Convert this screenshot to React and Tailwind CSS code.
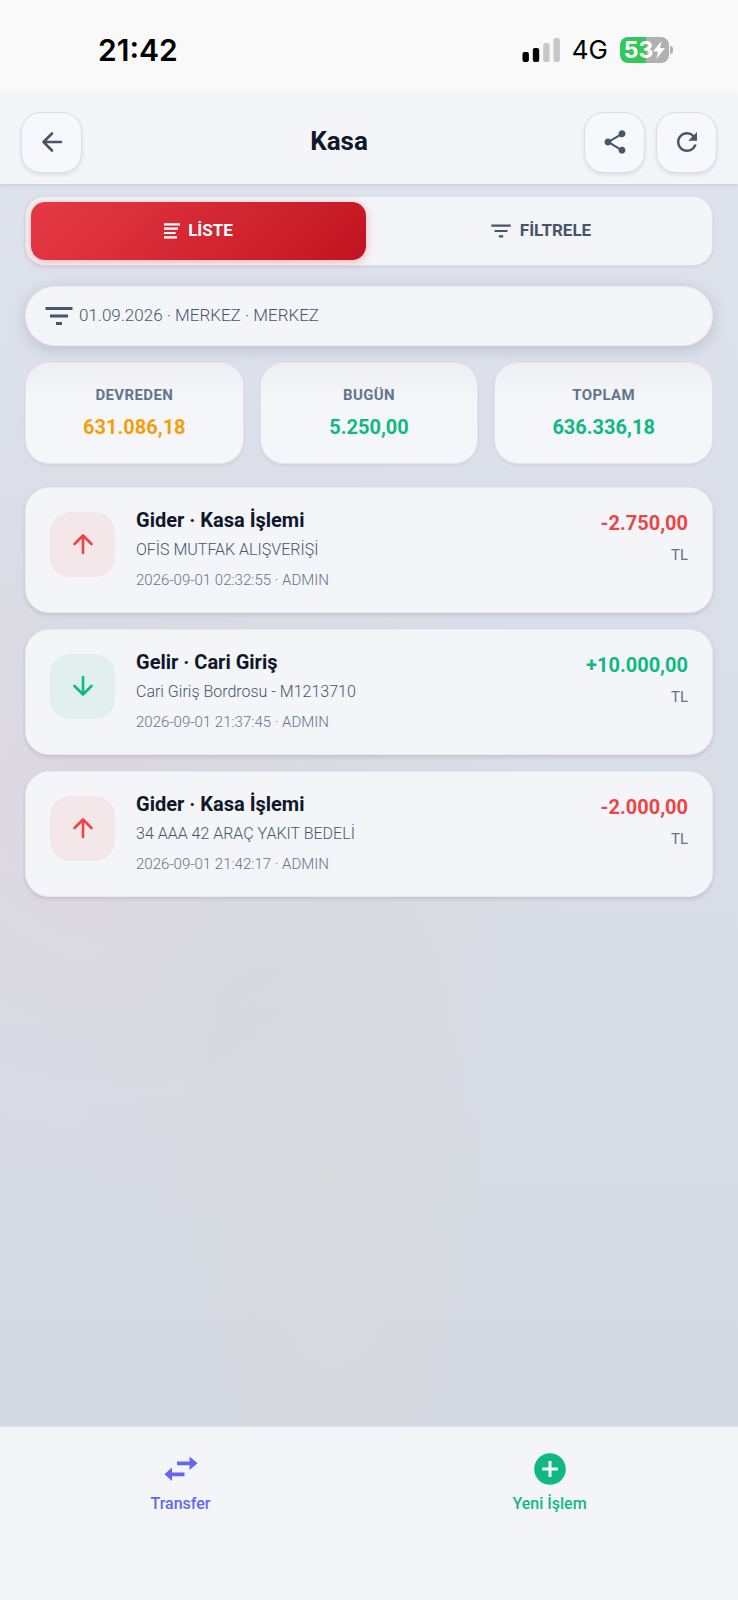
import clsx from 'clsx'
import { MdAddCircle, MdFilterList, MdRefresh, MdShare } from 'react-icons/md'

const FILTER_SUMMARY = '01.09.2026 · MERKEZ · MERKEZ'

const TOTALS = [
  { label: 'DEVREDEN', value: '631.086,18', color: 'text-[#f59e0b]' },
  { label: 'BUGÜN',    value: '5.250,00',   color: 'text-[#10b981]' },
  { label: 'TOPLAM',   value: '636.336,18', color: 'text-[#10b981]' },
]

const ENTRIES = [
  { id: 1, type: 'out', title: 'Gider · Kasa İşlemi', note: 'OFİS MUTFAK ALIŞVERİŞİ',          meta: '2026-09-01 02:32:55 · ADMIN', amount: '-2.750,00' },
  { id: 2, type: 'in',  title: 'Gelir · Cari Giriş',  note: 'Cari Giriş Bordrosu - M1213710', meta: '2026-09-01 21:37:45 · ADMIN', amount: '+10.000,00' },
  { id: 3, type: 'out', title: 'Gider · Kasa İşlemi', note: '34 AAA 42 ARAÇ YAKIT BEDELİ',    meta: '2026-09-01 21:42:17 · ADMIN', amount: '-2.000,00' },
]

const ROTATION = { up: 'rotate-0', down: 'rotate-180', left: '-rotate-90' }

function Arrow({ direction }) {
  return (
    <svg viewBox="0 0 24 24" className={clsx('size-6', ROTATION[direction])} fill="none" stroke="currentColor"
         strokeWidth="2.6" strokeLinecap="round" strokeLinejoin="round" aria-hidden="true">
      <path d="M12 21V3.500M3.500 12 12 3.500l8.500 8.500" />
    </svg>
  )
}

function ListIcon() {
  return (
    <svg viewBox="0 0 16 16" className="size-4" fill="currentColor" aria-hidden="true">
      <path d="M0 .3h16v2.200H0zM0 4.600h14v2.200H0zM0 8.900h11.500v2.200H0zM0 13.200h13v2.200H0z" />
    </svg>
  )
}

function TransferIcon() {
  return (
    <svg viewBox="0 0 34 38" className="h-[38px] w-[34px]" fill="currentColor" aria-hidden="true">
      <path d="M13 11.500h12.500V6.500L33.500 13.300l-8 6.800V15.200H13z" />
      <path d="M20.500 22.500H8V17.500L.5 24.300l7.500 6.800V26.200h12.500z" />
    </svg>
  )
}

function StatusBar() {
  return (
    <div className="flex h-[93px] items-center justify-between bg-[#f9f9f9] pt-1.5 pr-[65px] pl-[98px] font-['Inter',sans-serif] text-black">
      <span className="text-[30px] leading-9 font-semibold">21:42</span>
      <div className="flex items-center gap-3">
        <svg viewBox="0 0 38 24" className="h-6 w-[38px]" aria-hidden="true">
          <rect x="0.500" y="14" width="6.400" height="10" rx="2" />
          <rect x="10.800" y="10" width="6.400" height="14" rx="2" />
          <rect x="21.200" y="5" width="6.400" height="19" rx="2" fill="#c8c8c8" />
          <rect x="31.500" y="0" width="6.400" height="24" rx="2" fill="#c8c8c8" />
        </svg>
        <span className="text-[26px] leading-8">4G</span>
        <div className="flex items-center gap-px">
          <div className="flex h-[26px] w-[49px] items-center justify-center rounded-lg bg-linear-to-r from-[#34c759] from-53% to-[#b0b0b0] to-53% text-white">
            <span className="text-[23px] leading-6 font-bold">53</span>
            <svg viewBox="0 0 12 18" className="h-[18px] w-3" fill="currentColor" aria-hidden="true">
              <path d="M8.500 0 0 10.500h5L3.500 18 12 7H7z" />
            </svg>
          </div>
          <div className="h-2 w-[3px] rounded-r-full bg-[#b0b0b0]" />
        </div>
      </div>
    </div>
  )
}

function IconButton({ label, children }) {
  return (
    <button
      type="button"
      aria-label={label}
      className="flex size-[61px] items-center justify-center rounded-[20px] border border-[#dcdee3] bg-[#f6f8fb] pb-0.5 text-[#475569] shadow-[0_2px_4px_rgba(15,23,42,0.1)]"
    >
      {children}
    </button>
  )
}

function Header() {
  return (
    <header className="relative flex items-center bg-[#f3f5f9] px-[21px] pt-[19px] pb-[11px] shadow-[0_1px_4px_rgba(15,23,42,0.12)]">
      <IconButton label="Geri"><Arrow direction="left" /></IconButton>
      <h1 className="flex-1 pb-1 pl-3 text-center text-[26px] leading-8 font-bold text-[#0f172a]">Kasa</h1>
      <div className="flex gap-[11px]">
        <IconButton label="Paylaş"><MdShare className="size-7" /></IconButton>
        <IconButton label="Yenile"><MdRefresh className="size-[30px]" /></IconButton>
      </div>
    </header>
  )
}

function Tabs() {
  return (
    <div className="grid grid-cols-2 gap-[6px] rounded-[20px] border border-[#dfe1e7] bg-[#f3f5f9] p-[5px] shadow-[0_1px_3px_rgba(15,23,42,0.08)]">
      <button type="button" aria-pressed="true"
              className="flex h-[58px] items-center justify-center gap-2 rounded-[14px] bg-linear-135 from-[#e63946] to-[#c1121f] text-[17px] font-bold text-white shadow-[0_2px_10px_rgba(230,57,70,0.35)]">
        <ListIcon />
        LİSTE
      </button>
      <button type="button" aria-pressed="false"
              className="flex h-[58px] items-center justify-center gap-1.5 rounded-[14px] text-[17px] font-bold text-[#475569]">
        <MdFilterList className="size-[26px]" />
        FİLTRELE
      </button>
    </div>
  )
}

function TotalCard({ label, value, color }) {
  return (
    <div className="flex flex-col items-center rounded-3xl border border-[#e3e5ea] bg-linear-to-b from-[#eceef2] to-[#f4f6fa] to-35% py-5 shadow-[0_1px_3px_rgba(15,23,42,0.08)]">
      <span className="text-[15px] leading-6 font-bold tracking-wide text-[#64748b]">{label}</span>
      <span className={clsx('mt-1 text-xl leading-8 font-bold', color)}>{value}</span>
    </div>
  )
}

function EntryCard({ type, title, note, meta, amount }) {
  const isIn = type === 'in'

  return (
    <li className="flex items-start rounded-3xl border border-[#e9ebf0] bg-[#f3f5f9] px-6 py-[18px] shadow-[0_2px_4px_rgba(15,23,42,0.12)]">
      <div className={clsx(
        'mt-1.5 flex size-[65px] items-center justify-center rounded-[20px] pb-0.5',
        isIn ? 'bg-[#e1f0ee] text-[#10b981]' : 'bg-[#f3e7ea] text-[#ef4444]',
      )}>
        <Arrow direction={isIn ? 'down' : 'up'} />
      </div>
      <div className="ml-[21px] min-w-0 flex-1">
        <h2 className="text-xl leading-7 font-bold text-[#0f172a]">{title}</h2>
        <p className="text-base leading-8 font-light text-[#475569]">{note}</p>
        <p className="text-[15px] leading-7 font-light text-[#64748b]">{meta}</p>
      </div>
      <div className="pt-px text-right">
        <p className={clsx('text-xl leading-8 font-bold', isIn ? 'text-[#10b981]' : 'text-[#ef4444]')}>{amount}</p>
        <p className="text-[15px] leading-8 text-[#64748b]">TL</p>
      </div>
    </li>
  )
}

function BottomNav() {
  return (
    <nav className="grid h-[174px] grid-cols-2 border-t border-[#e1e4e9] bg-[#f3f5f9] pt-[23px] text-base leading-6 font-medium">
      <a href="#transfer" className="flex flex-col items-center gap-1 pr-2 text-[#6366f1]">
        <TransferIcon />
        Transfer
      </a>
      <a href="#yeni-islem" className="flex flex-col items-center gap-1 pr-2 text-[#10b981]">
        <MdAddCircle className="size-[38px]" />
        Yeni İşlem
      </a>
    </nav>
  )
}

export default function App() {
  return (
    <div className="flex min-h-screen flex-col bg-[#d8dce7] font-['Roboto',sans-serif]">
      <StatusBar />
      <Header />

      <main className="flex-1 bg-[radial-gradient(ellipse_at_45%_80%,#d8dade_0%,transparent_45%),radial-gradient(ellipse_at_15%_50%,#dcd7df_0%,transparent_50%),linear-gradient(to_bottom,#dde2ec,#d9dde8_50%,#d4d9e4)] px-[25px] pt-3">
        <Tabs />

        {/* Active filters */}
        <div className="mt-5 flex h-[60px] items-center gap-0.5 rounded-full border border-[#e9ebf0] bg-[#f3f5f9] px-[15px] text-[#475569] shadow-[0_4px_16px_rgba(15,23,42,0.15)]">
          <MdFilterList className="size-9" />
          <span className="text-[17px] font-light">{FILTER_SUMMARY}</span>
        </div>

        <div className="mt-4 grid grid-cols-3 gap-4">
          {TOTALS.map(t => <TotalCard key={t.label} {...t} />)}
        </div>

        <ul className="mt-[23px] flex flex-col gap-4">
          {ENTRIES.map(e => <EntryCard key={e.id} {...e} />)}
        </ul>
      </main>

      <BottomNav />
    </div>
  )
}
